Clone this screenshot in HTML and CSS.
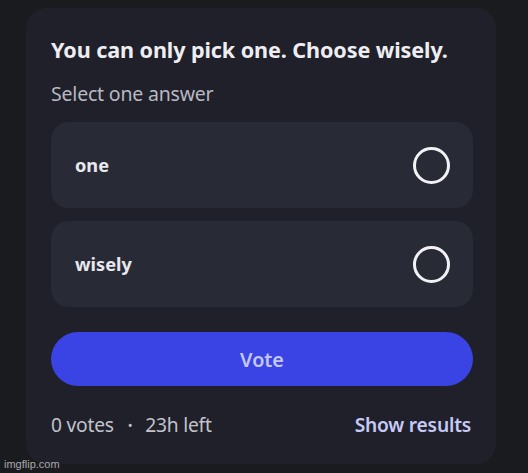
FILE: index.html
```html
<!DOCTYPE html>
<html>
<head>
<meta charset="utf-8">
<link rel="stylesheet" href="styles.css">
</head>
<body>
<div class="card">
  <h1 class="title">You can only pick one. Choose wisely.</h1>
  <div class="subtitle">Select one answer</div>
  <div class="options">
    <div class="option"><span class="label">one</span><span class="radio"></span></div>
    <div class="option"><span class="label">wisely</span><span class="radio"></span></div>
  </div>
  <button class="vote">Vote</button>
  <div class="footer">
    <span class="meta">0 votes <span class="dot">•</span> 23h left</span>
    <span class="results">Show results</span>
  </div>
</div>
<div class="watermark">imgflip.com</div>
</body>
</html>
```
FILE: styles.css
```css
html, body {
  margin: 0;
  padding: 0;
}
body {
  width: 528px;
  height: 473px;
  overflow: hidden;
  background: #1a1b1e;
  font-family: "Noto Sans", "Open Sans", sans-serif;
  position: relative;
}
.card {
  margin: 8px 0 0 26px;
  width: 470px;
  height: 456px;
  box-sizing: border-box;
  padding: 28px 23px 0 25px;
  background: #1f2029;
  border-radius: 20px;
  display: flex;
  flex-direction: column;
}
.title {
  margin: 0;
  font-size: 21.6px;
  line-height: 28px;
  font-weight: 700;
  color: #eeeef2;
  letter-spacing: -0.1px;
  white-space: nowrap;
}
.subtitle {
  margin-top: 18px;
  font-size: 19.5px;
  line-height: 24px;
  color: #b8b9c2;
  letter-spacing: -0.2px;
}
.options {
  margin-top: 16px;
  display: flex;
  flex-direction: column;
  gap: 13px;
}
.option {
  height: 86px;
  border-radius: 18px;
  background: #282a35;
  display: flex;
  align-items: center;
  justify-content: space-between;
  padding: 0 23px 0 24px;
}
.label {
  font-size: 18.2px;
  font-weight: 700;
  color: #e8e8ee;
}
.radio {
  width: 31px;
  height: 31px;
  border: 3px solid #f2f2f5;
  border-radius: 50%;
}
.vote {
  margin-top: 25px;
  height: 54px;
  border: none;
  border-radius: 27px;
  background: #3a44e4;
  color: #c3c7f4;
  font-family: inherit;
  font-size: 19.8px;
  font-weight: 600;
}
.footer {
  margin-top: 26px;
  display: flex;
  justify-content: space-between;
  align-items: center;
  font-size: 19.2px;
  line-height: 26px;
}
.meta {
  color: #c2c3cb;
  letter-spacing: -0.2px;
}
.dot {
  font-size: 13px;
  margin: 0 8px 0 9px;
  vertical-align: 2px;
}
.results {
  color: #c6caf6;
  font-weight: 600;
  margin-right: 2px;
  letter-spacing: -0.2px;
}
.watermark {
  position: absolute;
  left: 4px;
  bottom: 3px;
  font-family: "Liberation Sans", sans-serif;
  font-size: 11px;
  color: #a8a8ac;
}
```
